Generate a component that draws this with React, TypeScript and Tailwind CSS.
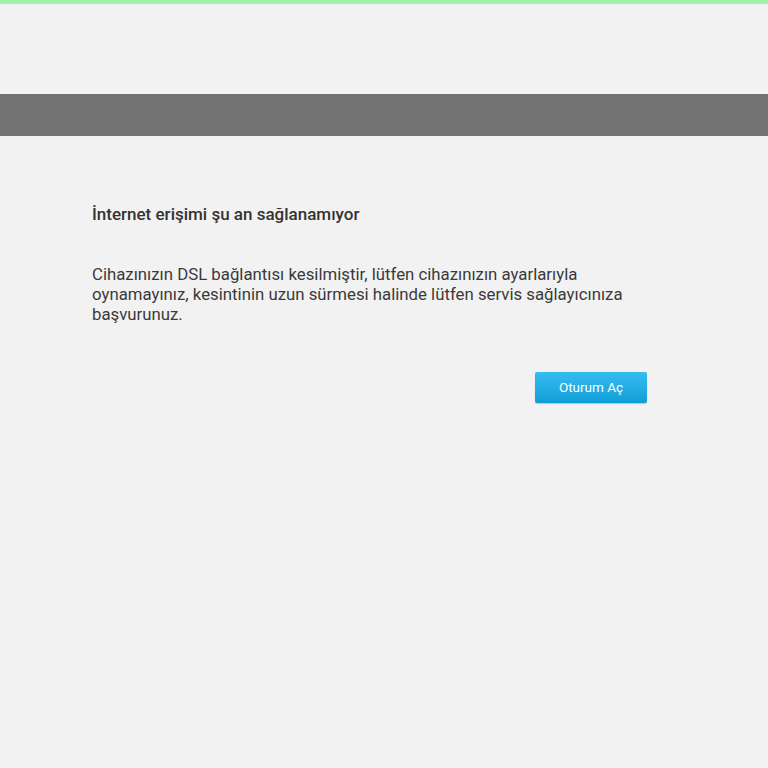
export default function App() {
  return (
    <div className="min-h-[768px] bg-[#f2f2f2] font-['Roboto',sans-serif]">
      <div className="h-[4px] bg-[#a2f2aa]" />
      <div className="h-[90px]" />
      <div className="h-[42px] bg-[#737373]" />
      <div className="w-[555px] ml-[92px] pt-[68px]">
        <h1 className="text-[17px] leading-[20px] font-medium text-[#333333]">
          İnternet erişimi şu an sağlanamıyor
        </h1>
        <p className="mt-[40px] text-[16.8px] leading-[20px] text-[#3a3a3a]">
          Cihazınızın DSL bağlantısı kesilmiştir, lütfen cihazınızın ayarlarıyla oynamayınız, kesintinin uzun sürmesi halinde lütfen servis sağlayıcınıza başvurunuz.
        </p>
        <div className="mt-[48px] flex justify-end">
          <button
            type="button"
            className="w-[112px] h-[31px] rounded-[2px] bg-gradient-to-b from-[#33bdf0] to-[#0e9ed8] text-white text-[13.5px] shadow-[0_1px_1px_rgba(0,0,0,0.2)]"
          >
            Oturum Aç
          </button>
        </div>
      </div>
    </div>
  )
}
